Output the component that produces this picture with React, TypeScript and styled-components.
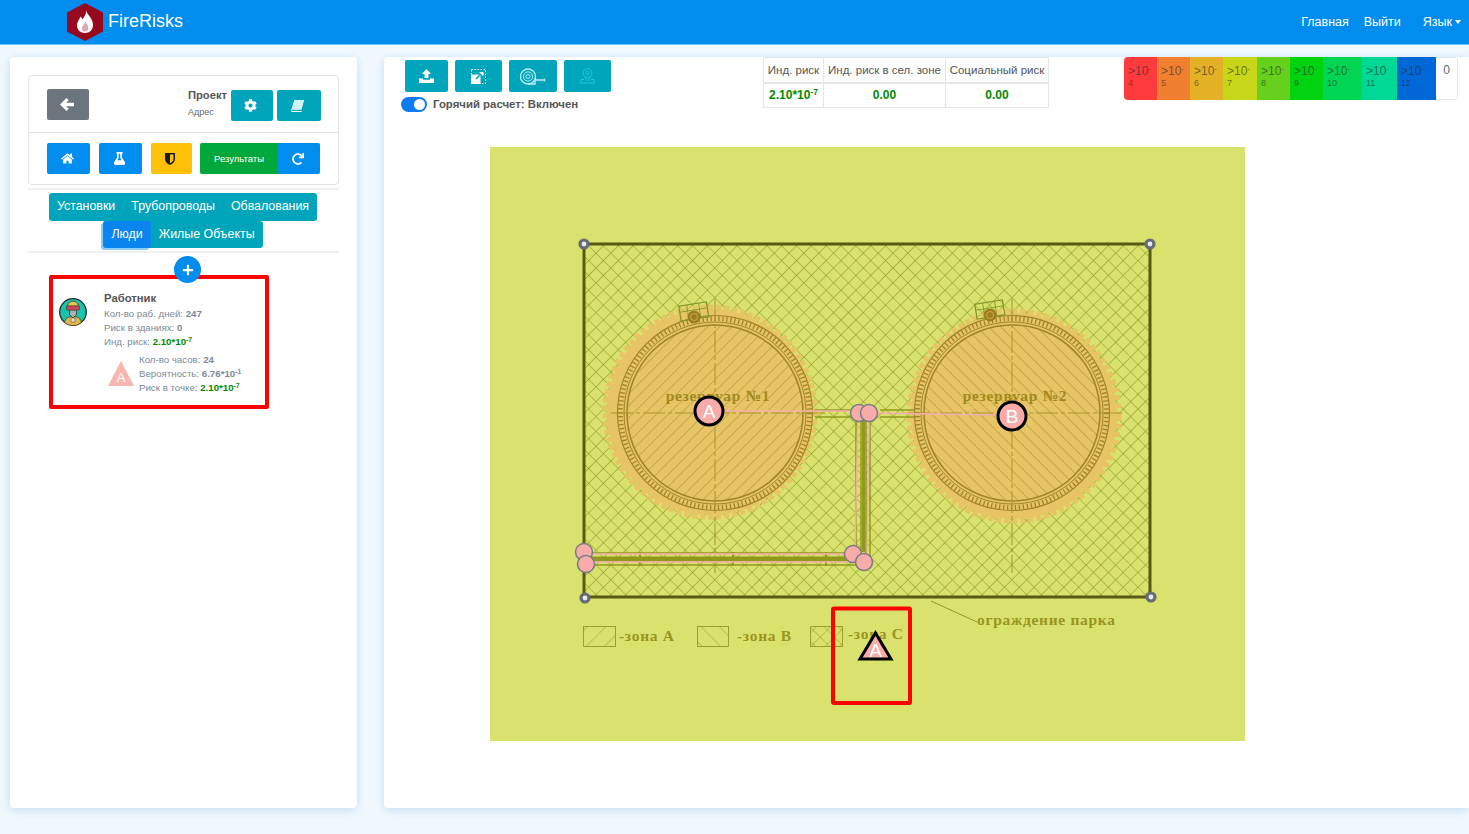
import { ReactNode } from "react";
import { createGlobalStyle, styled } from "styled-components";
import { FaCog, FaFlask, FaHome, FaPlus, FaRedo } from "react-icons/fa";

const GlobalStyle = createGlobalStyle`
  html, body {
    margin: 0;
    padding: 0;
    height: 834px;
    overflow: hidden;
    background: #f1f8fd;
    font-family: "Liberation Sans", Arial, sans-serif;
  }
`;

const TEAL = "#00a5bb";
const BLUE = "#008ded";

const riskCells = [
  { power: "4", color: "#ff3b3d", width: 33 },
  { power: "5", color: "#f0802f", width: 33 },
  { power: "6", color: "#e3b026", width: 33 },
  { power: "7", color: "#c8d619", width: 34 },
  { power: "8", color: "#66d11c", width: 33 },
  { power: "9", color: "#00d30f", width: 33 },
  { power: "10", color: "#00d653", width: 39 },
  { power: "11", color: "#00d896", width: 35 },
  { power: "12", color: "#0068d6", width: 39 },
];

function Power({ value }: { value: string }) {
  return (
    <>
      2.10*10<Sup>{value}</Sup>
    </>
  );
}

function UploadIcon() {
  return (
    <svg width="15" height="14" viewBox="0 0 15 14" fill="#fff">
      <path d="M7.5 0 12 5H9.4v4H5.6V5H3zM0 9.5h4v1.3h7V9.5h4V14H0z" />
    </svg>
  );
}

function ResizeIcon() {
  return (
    <svg width="15" height="15" viewBox="0 0 15 15" fill="none">
      <path d="M.5.5h14v14H.5z" stroke="#fff" strokeDasharray="1.500 1.500" />
      <path d="M0 5.500h9.500V15H0z" fill="#fff" />
      <path d="M5 10 11 4" stroke={TEAL} strokeWidth="1.600" />
      <path d="M8 3h4.500v4.500z" fill="#fff" />
    </svg>
  );
}

function TapeIcon() {
  return (
    <svg width="26" height="17" viewBox="0 0 26 17" fill="none" stroke="#bdeef4">
      <circle cx="8" cy="8.500" r="7.500" strokeWidth="1.300" />
      <circle cx="8" cy="8.500" r="4.600" />
      <circle cx="8" cy="8.500" r="2" />
      <path d="M8 16H15V10M15 12H25M24.500 10.500v3" strokeWidth="1.300" />
    </svg>
  );
}

function PinIcon() {
  return (
    <svg width="15" height="16" viewBox="0 0 15 16" fill="none" stroke="#25c3d6">
      <circle cx="7.5" cy="5" r="4.4" />
      <circle cx="7.5" cy="5" r="1.6" />
      <path d="M4.5 9 7.5 13l3-4M4 11.5H1L.5 15h14l-.5-3.500h-3" />
    </svg>
  );
}

function BookIcon() {
  return (
    <svg width="13" height="12" viewBox="0 0 13 12">
      <path d="M3.500 0H13l-2.600 9.500H1L.6 10.300c0 .5.3.7.9.7h9.300l-.3 1H1.200C.3 12-.2 11.300.1 10.300z" fill="#fff" />
      <path d="M3.500 0H13l-2.600 9.500H1z" fill="#d4f3f7" />
    </svg>
  );
}

function ArrowIcon() {
  return (
    <svg width="14" height="13" viewBox="0 0 14 13" fill="#fff">
      <path d="M0 6.500 6.500 0 8.800 2.300 6 4.800h8v3.400H6l2.800 2.500L6.500 13z" />
    </svg>
  );
}

function ShieldIcon() {
  return (
    <svg width="10" height="12" viewBox="0 0 10 12">
      <path d="M0 0h10v6c0 3-2.500 5-5 6C2.500 11 0 9 0 6z" fill="#1a1a10" />
      <path d="M5 1.500h3.500V6C8.500 8 6.800 9.500 5 10.300z" fill="#ffc107" />
    </svg>
  );
}

function WorkerAvatar() {
  return (
    <svg width="28" height="28" viewBox="0 0 28 28">
      <circle cx="14" cy="14" r="13.300" fill="#17c4ad" stroke="#1c2a2c" strokeWidth="1.300" />
      <path d="M5.500 24.500c1-4.500 4-6 8.500-6s7.500 1.500 8.500 6a13 13 0 0 1-17 0z" fill="#e3b54d" stroke="#3d3420" strokeWidth=".7" />
      <path d="M10.500 12h7v4.500L14 20l-3.500-3.500z" fill="#a9b0ae" stroke="#2b2b2b" strokeWidth=".7" />
      <path d="M8.500 8c.5-3 2.800-4.800 5.500-4.800S19 5 19.500 8z" fill="#e9c54a" stroke="#3d3420" strokeWidth=".7" />
      <path d="M7.500 8h13v4h-13z" fill="#c9485a" stroke="#3d3420" strokeWidth=".5" />
      <path d="M12 20h4v4h-4z" fill="#e7e3d5" stroke="#3d3420" strokeWidth=".5" />
    </svg>
  );
}

function SmallTriangle() {
  return (
    <svg width="26" height="26" viewBox="0 0 26 26">
      <path d="M13 0 26 25H0z" fill="#f8b6b0" />
      <text x="13" y="21" textAnchor="middle" fontSize="13" fill="#fff" fontFamily="Liberation Sans">
        A
      </text>
    </svg>
  );
}

function LogoMark() {
  return (
    <svg width="36" height="38" viewBox="0 0 36 38">
      <path d="M18 0 36 9.500v19L18 38 0 28.500v-19z" fill="#96091f" />
      <path
        d="M19 7c1 5 7 8 7 15 0 5-3.500 8-8 8s-8-3-8-7.500c0-4 2.500-5.500 3.500-9 1 .7 1.500 2 1.600 3C17.500 14 19.500 11 19 7z"
        fill="#fff"
      />
      <path d="M18.500 18c.5 3 3 4 3 7 0 2-1.500 3.500-3.500 3.500-1.800 0-3-1.200-3-3 0-3 3-4 3.500-7.500z" fill="#96091f" opacity=".35" />
    </svg>
  );
}

function Tank({
  cx,
  cy,
  zoneX,
  zoneY,
  hatch,
  label,
  valveX,
  valveY,
}: {
  cx: number;
  cy: number;
  zoneX: number;
  zoneY: number;
  hatch: string;
  label: string;
  valveX: number;
  valveY: number;
}) {
  return (
    <g>
      <circle cx={zoneX} cy={zoneY} r={103} fill="#e7c465" />
      <circle cx={zoneX} cy={zoneY} r={104} fill="none" stroke="#e7c465" strokeWidth="7" strokeDasharray="5 3" />
      <circle cx={cx} cy={cy} r={88} fill={`url(#${hatch})`} />
      <circle cx={cx} cy={cy} r={88} fill="none" stroke="#a0842a" strokeWidth="1.500" />
      <circle cx={cx} cy={cy} r={91} fill="none" stroke="#a0842a" strokeWidth="1" />
      <circle cx={cx} cy={cy} r={94.500} fill="none" stroke="#a0842a" strokeWidth="5" strokeDasharray="1.300 2.700" />
      <circle cx={cx} cy={cy} r={97.500} fill="none" stroke="#a0842a" strokeWidth="1.200" />
      <g transform={`rotate(-9 ${valveX} ${valveY})`}>
        <rect x={valveX - 14} y={valveY - 9} width="28" height="15" fill="none" stroke="#7f9428" strokeWidth="1.200" />
        <path d={`M${valveX - 14} ${valveY - 3}h28M${valveX - 6} ${valveY - 9}v15M${valveX + 6} ${valveY - 9}v15`} stroke="#7f9428" strokeWidth=".8" />
      </g>
      <circle cx={valveX} cy={valveY + 4} r="6.500" fill="#9c7e20" />
      <circle cx={valveX} cy={valveY + 4} r="3.500" fill="none" stroke="#e7c465" strokeWidth=".6" />
      <path
        d={`M${cx} ${cy - 114}V${cy + 160}M${cx - 104} ${cy}H${cx + 113}`}
        stroke="#a8952c"
        strokeWidth="1"
        strokeDasharray="22 3 4 3"
      />
      <TankLabel x={cx + 3} y={cy - 12} textAnchor="middle">
        {label}
      </TankLabel>
    </g>
  );
}

function Handle({ x, y }: { x: number; y: number }) {
  return <circle cx={x} cy={y} r="4" fill="#e8eaf0" stroke="#666b74" strokeWidth="3.200" />;
}

function PinkNode({ x, y }: { x: number; y: number }) {
  return <circle cx={x} cy={y} r="8.500" fill="#f8acaa" stroke="#777c80" strokeWidth="1.500" />;
}

function Point({ x, y, name }: { x: number; y: number; name: string }) {
  return (
    <g>
      <circle cx={x} cy={y} r="14" fill="#f8acaa" stroke="#000" strokeWidth="3" />
      <PointLetter x={x} y={y + 7} textAnchor="middle">
        {name}
      </PointLetter>
    </g>
  );
}

function ParkMap() {
  return (
    <MapCanvas width="755" height="594" viewBox="490 147 755 594">
      <defs>
        <pattern id="cross" width="10.500" height="10.500" patternUnits="userSpaceOnUse" patternTransform="rotate(45 584 244)">
          <path d="M0 0H10.500M0 0V10.500" stroke="#86911f" strokeWidth="1.100" fill="none" />
        </pattern>
        <pattern id="hatchA" width="8.500" height="8.500" patternUnits="userSpaceOnUse" patternTransform="rotate(45)">
          <path d="M0 0V8.500" stroke="#a08a2c" strokeWidth="1" />
        </pattern>
        <pattern id="hatchB" width="8.500" height="8.500" patternUnits="userSpaceOnUse" patternTransform="rotate(-45)">
          <path d="M0 0V8.500" stroke="#a08a2c" strokeWidth="1" />
        </pattern>
        <pattern id="legendA" width="13" height="13" patternUnits="userSpaceOnUse" patternTransform="rotate(45)">
          <path d="M0 0V13" stroke="#9aa030" strokeWidth="1" />
        </pattern>
        <pattern id="legendB" width="13" height="13" patternUnits="userSpaceOnUse" patternTransform="rotate(-45)">
          <path d="M0 0V13" stroke="#9aa030" strokeWidth="1" />
        </pattern>
        <pattern id="legendC" width="10" height="10" patternUnits="userSpaceOnUse" patternTransform="rotate(45)">
          <path d="M0 0H10M0 0V10" stroke="#9aa030" strokeWidth="1" fill="none" />
        </pattern>
      </defs>

      <rect x="490" y="147" width="755" height="594" fill="#d9e26d" />
      <rect x="584" y="244" width="566" height="353" fill="url(#cross)" />

      <Tank cx={715} cy={413} zoneX={710} zoneY={412} hatch="hatchA" label="резервуар №1" valveX={694} valveY={313} />
      <Tank cx={1012} cy={413} zoneX={1014} zoneY={416} hatch="hatchB" label="резервуар №2" valveX={990} valveY={311} />

      {/* трубы */}
      <g fill="none" stroke="#8f9a1c">
        <path d="M815 410H858M815 417H856M880 410H914M880 417H914" strokeWidth="1.500" />
        <path d="M856 417V553M870 415V565M861 417V556M866 417V560" strokeWidth="1.500" />
        <path d="M588 553H856M588 565H870" strokeWidth="1.500" />
        <path d="M590 559H852" strokeWidth="5" />
        <path d="M863.500 420V552" strokeWidth="3" />
        <path d="M640 552v14M733 552v14M826 552v14" strokeWidth="2" />
      </g>
      <g fill="none" stroke="#f3aeb0" strokeWidth="1.500">
        <path d="M723 411H858L855 554H584" />
        <path d="M998 415 869 413 867 562H586" />
      </g>

      <rect x="584" y="244" width="566" height="353" fill="none" stroke="#565a12" strokeWidth="3" />
      <Handle x={584} y={244} />
      <Handle x={1150} y={244} />
      <Handle x={585} y={598} />
      <Handle x={1151} y={597} />

      <PinkNode x={584} y={552} />
      <PinkNode x={586} y={564} />
      <PinkNode x={853} y={554} />
      <PinkNode x={864} y={562} />
      <PinkNode x={859} y={413} />
      <PinkNode x={869} y={413} />
      <Point x={709} y={411} name="A" />
      <Point x={1012} y={416} name="B" />

      <path d="M931 601 977 622" stroke="#8f9a26" strokeWidth="1" />
      <MapLabel x="977" y="625">
        ограждение парка
      </MapLabel>

      <rect x="583.500" y="626.500" width="32" height="20" fill="url(#legendA)" stroke="#9aa030" />
      <MapLabel x="619" y="641">
        -зона А
      </MapLabel>
      <rect x="697.500" y="626.500" width="31" height="20" fill="url(#legendB)" stroke="#9aa030" />
      <MapLabel x="737" y="641">
        -зона В
      </MapLabel>
      <rect x="810.500" y="626.500" width="32" height="20" fill="url(#legendC)" stroke="#9aa030" />
      <MapLabel x="848" y="639">
        -зона С
      </MapLabel>

      <path d="M875.500 633 891 659H860z" fill="#f8acaa" stroke="#000" strokeWidth="3" />
      <PointLetter x={875.500} y={657} textAnchor="middle">
        A
      </PointLetter>
      <rect x="833" y="608.500" width="77" height="94.500" fill="none" stroke="#ff0000" strokeWidth="4" rx="1" />
    </MapCanvas>
  );
}

function ToolButton({ children, $width }: { children: ReactNode; $width: number }) {
  return <SquareButton $width={$width}>{children}</SquareButton>;
}

export default function App() {
  return (
    <>
      <GlobalStyle />
      <Navbar>
        <Brand>
          <LogoMark />
          <BrandName>FireRisks</BrandName>
        </Brand>
        <NavLinks>
          <NavLink>Главная</NavLink>
          <NavLink>Выйти</NavLink>
          <NavLink $caret>Язык</NavLink>
        </NavLinks>
      </Navbar>

      <Main>
        <SidePanel>
          <ProjectBox>
            <ProjectRow>
              <BackButton>
                <ArrowIcon />
              </BackButton>
              <ProjectActions>
                <ProjectInfo>
                  <ProjectName>Проект</ProjectName>
                  <ProjectAddress>Адрес</ProjectAddress>
                </ProjectInfo>
                <IconButton $color={TEAL} $width={42}>
                  <FaCog />
                </IconButton>
                <IconButton $color={TEAL} $width={44}>
                  <BookIcon />
                </IconButton>
              </ProjectActions>
            </ProjectRow>
            <ModeRow>
              <IconButton $color={BLUE} $width={43}>
                <FaHome />
              </IconButton>
              <IconButton $color={BLUE} $width={43}>
                <FaFlask />
              </IconButton>
              <IconButton $color="#ffc107" $width={41}>
                <ShieldIcon />
              </IconButton>
              <ResultGroup>
                <ResultButton>Результаты</ResultButton>
                <RefreshButton>
                  <FaRedo />
                </RefreshButton>
              </ResultGroup>
            </ModeRow>
          </ProjectBox>

          <Separator />
          <Tabs>
            <TabRow>
              <Tab>Установки</Tab>
              <Tab>Трубопроводы</Tab>
              <Tab>Обвалования</Tab>
            </TabRow>
            <TabRow>
              <Tab $active>Люди</Tab>
              <Tab>Жилые Объекты</Tab>
            </TabRow>
          </Tabs>
          <Separator $gap={3} />

          <AddButton>
            <FaPlus />
          </AddButton>

          <WorkerCard>
            <AvatarSlot>
              <WorkerAvatar />
            </AvatarSlot>
            <WorkerInfo>
              <WorkerName>Работник</WorkerName>
              <InfoLine>
                Кол-во раб. дней: <b>247</b>
              </InfoLine>
              <InfoLine>
                Риск в зданиях: <b>0</b>
              </InfoLine>
              <InfoLine>
                Инд. риск:{" "}
                <RiskValue>
                  <Power value="-7" />
                </RiskValue>
              </InfoLine>
              <PointBlock>
                <SmallTriangle />
                <div>
                  <InfoLine>
                    Кол-во часов: <b>24</b>
                  </InfoLine>
                  <InfoLine>
                    Вероятность:{" "}
                    <b>
                      6.76*10<Sup>-1</Sup>
                    </b>
                  </InfoLine>
                  <InfoLine>
                    Риск в точке:{" "}
                    <RiskValue>
                      <Power value="-7" />
                    </RiskValue>
                  </InfoLine>
                </div>
              </PointBlock>
            </WorkerInfo>
          </WorkerCard>
        </SidePanel>

        <Workspace>
          <TopRow>
            <ToolColumn>
              <ToolBar>
                <ToolButton $width={43}>
                  <UploadIcon />
                </ToolButton>
                <ToolButton $width={47}>
                  <ResizeIcon />
                </ToolButton>
                <ToolButton $width={48}>
                  <TapeIcon />
                </ToolButton>
                <ToolButton $width={47}>
                  <PinIcon />
                </ToolButton>
              </ToolBar>
              <HotCalc>
                <Toggle />
                Горячий расчет: Включен
              </HotCalc>
            </ToolColumn>

            <ResultTable>
              <thead>
                <tr>
                  <HeadCell $width={60}>Инд. риск</HeadCell>
                  <HeadCell $width={122}>Инд. риск в сел. зоне</HeadCell>
                  <HeadCell $width={103}>Социальный риск</HeadCell>
                </tr>
              </thead>
              <tbody>
                <tr>
                  <ValueCell>
                    <Power value="-7" />
                  </ValueCell>
                  <ValueCell>0.00</ValueCell>
                  <ValueCell>0.00</ValueCell>
                </tr>
              </tbody>
            </ResultTable>

            <RiskScale>
              {riskCells.map((c) => (
                <RiskCell key={c.power} $color={c.color} $width={c.width}>
                  <RiskTop>
                    &gt;10<RiskDash>-</RiskDash>
                  </RiskTop>
                  <RiskPower>{c.power}</RiskPower>
                </RiskCell>
              ))}
              <ZeroCell>0</ZeroCell>
            </RiskScale>
          </TopRow>
          <ParkMap />
        </Workspace>
      </Main>
    </>
  );
}

const Navbar = styled.nav`
  height: 45px;
  background: ${BLUE};
  display: flex;
  align-items: center;
  justify-content: space-between;
  padding: 0 8px 1px 67px;
  border-bottom: 1px solid #6cc0f5;
  box-sizing: border-box;
`;

const Brand = styled.div`
  display: flex;
  align-items: center;
  gap: 5px;
`;

const BrandName = styled.span`
  color: #fff;
  font-size: 18px;
`;

const NavLinks = styled.div`
  display: flex;
  align-items: center;
  gap: 15px;
`;

const NavLink = styled.a<{ $caret?: boolean }>`
  color: #fff;
  font-size: 12.500px;
  margin-left: ${(p) => (p.$caret ? "7px" : "0")};

  &::after {
    content: "";
    display: ${(p) => (p.$caret ? "inline-block" : "none")};
    margin-left: 3px;
    vertical-align: 2px;
    border-top: 4px solid #fff;
    border-left: 3px solid transparent;
    border-right: 3px solid transparent;
  }
`;

const Main = styled.main`
  display: flex;
  gap: 27px;
  padding: 12px 0 0 10px;
  height: 751px;
`;

const SidePanel = styled.aside`
  width: 347px;
  height: 751px;
  flex: none;
  box-sizing: border-box;
  padding: 18px 18px 0;
  background: #fff;
  border-radius: 4px;
  box-shadow: 0 2px 10px rgba(0, 110, 200, 0.2);
`;

const ProjectBox = styled.div`
  width: 311px;
  height: 110px;
  box-sizing: border-box;
  border: 1px solid #dfe3e6;
  border-radius: 4px;
`;

const ProjectRow = styled.div`
  height: 57px;
  box-sizing: border-box;
  padding: 0 17px 0 18px;
  display: flex;
  align-items: center;
  justify-content: space-between;
  border-bottom: 1px solid #dfe3e6;
`;

const ProjectActions = styled.div`
  display: flex;
  align-items: center;
  gap: 4px;
  margin-top: 3px;
`;

const ProjectInfo = styled.div`
  margin-top: -6px;
`;

const ProjectName = styled.div`
  font-size: 11.200px;
  font-weight: bold;
  color: #555;
  line-height: 15px;
`;

const ProjectAddress = styled.div`
  font-size: 9px;
  color: #666;
  line-height: 11px;
  margin-top: 4px;
`;

const ButtonBase = styled.button`
  height: 31px;
  border: none;
  border-radius: 2px;
  padding: 0 3px 0 0;
  display: flex;
  align-items: center;
  justify-content: center;
  color: #fff;
  font-family: inherit;
  font-size: 13px;
`;

const BackButton = styled(ButtonBase)`
  width: 42px;
  background: #6c757d;
`;

const IconButton = styled(ButtonBase)<{ $color: string; $width: number }>`
  width: ${(p) => p.$width}px;
  background: ${(p) => p.$color};
`;

const ModeRow = styled.div`
  display: flex;
  gap: 9px;
  padding: 10px 0 0 18px;
`;

const ResultGroup = styled.div`
  display: flex;
  margin-left: -1px;
`;

const ResultButton = styled(ButtonBase)`
  width: 78px;
  padding: 0;
  background: #00a83c;
  font-size: 9.500px;
  border-radius: 2px 0 0 2px;
`;

const RefreshButton = styled(ButtonBase)`
  width: 42px;
  background: ${BLUE};
  font-size: 12px;
  border-radius: 0 2px 2px 0;
`;

const Separator = styled.hr<{ $gap?: number }>`
  border: none;
  border-top: 2px solid #eef0f2;
  margin: ${(p) => p.$gap ?? 3}px 0 2px;
`;

const Tabs = styled.div`
  display: flex;
  flex-direction: column;
  align-items: center;
  margin: 3px 0 0 -1px;
`;

const TabRow = styled.div`
  display: flex;
  background: ${TEAL};
  border-radius: 3px;
`;

const Tab = styled.div<{ $active?: boolean }>`
  height: 27.500px;
  line-height: 27.500px;
  padding: 0 8px;
  font-size: 12.400px;
  color: #fff;
  background: ${(p) => (p.$active ? "#0a84ee" : "transparent")};
  border-radius: 3px;
  box-shadow: ${(p) => (p.$active ? "-2px 2px 0 0 #8ccdf8" : "none")};
`;

const AddButton = styled.div`
  width: 27px;
  height: 27px;
  margin: 3px auto -8px;
  transform: translateX(4px);
  border-radius: 50%;
  background: ${BLUE};
  color: #fff;
  font-size: 12px;
  display: flex;
  align-items: center;
  justify-content: center;
  position: relative;
  z-index: 1;
`;

const WorkerCard = styled.div`
  margin-left: 21px;
  width: 220px;
  height: 134px;
  box-sizing: border-box;
  border: 4px solid #ff0000;
  border-radius: 2px;
  padding: 12px 0 0 6px;
  display: flex;
`;

const AvatarSlot = styled.div`
  width: 45px;
  flex: none;
  padding-top: 7px;
`;

const WorkerInfo = styled.div`
  color: #7c8a96;
  min-width: 0;
`;

const WorkerName = styled.div`
  font-size: 11.300px;
  font-weight: bold;
  color: #555;
  line-height: 14px;
  margin-bottom: 2px;
`;

const InfoLine = styled.div`
  font-size: 9.700px;
  line-height: 14px;
  white-space: nowrap;
`;

const Sup = styled.sup`
  font-size: 0.7em;
  line-height: 0;
  vertical-align: 0.5em;
`;

const RiskValue = styled.b`
  color: #008a00;
`;

const PointBlock = styled.div`
  display: flex;
  gap: 5px;
  align-items: center;
  margin: 4px 0 0 4px;
`;

const Workspace = styled.section`
  flex: 1;
  height: 751px;
  background: #fff;
  border-radius: 4px 0 0 4px;
  box-shadow: 0 2px 10px rgba(0, 110, 200, 0.2);
`;

const TopRow = styled.div`
  height: 90px;
  display: flex;
  align-items: flex-start;
  padding-left: 21px;
`;

const ToolColumn = styled.div`
  width: 358px;
  flex: none;
  padding-top: 3px;
`;

const ToolBar = styled.div`
  display: flex;
  gap: 7px;
`;

const SquareButton = styled(ButtonBase)<{ $width: number }>`
  width: ${(p) => p.$width}px;
  height: 32px;
  padding: 0;
  background: ${TEAL};
`;

const HotCalc = styled.div`
  margin: 5px 0 0 -4px;
  display: flex;
  align-items: center;
  gap: 6px;
  font-size: 11.400px;
  font-weight: bold;
  color: #555;
  line-height: 15px;
`;

const Toggle = styled.span`
  width: 26px;
  height: 15px;
  border-radius: 8px;
  background: #0d7cf2;
  position: relative;

  &::after {
    content: "";
    position: absolute;
    top: 2px;
    right: 2px;
    width: 11px;
    height: 11px;
    border-radius: 50%;
    background: #fff;
  }
`;

const ResultTable = styled.table`
  width: 285px;
  flex: none;
  height: 51px;
  border-collapse: collapse;
  table-layout: fixed;
`;

const HeadCell = styled.th<{ $width: number }>`
  width: ${(p) => p.$width}px;
  box-sizing: border-box;
  padding: 0;
  height: 25px;
  border: 1px solid #e3e6e9;
  border-bottom-width: 2px;
  font-size: 11.500px;
  font-weight: normal;
  color: #555;
  white-space: nowrap;
`;

const ValueCell = styled.td`
  padding: 0;
  border: 1px solid #e3e6e9;
  text-align: center;
  font-size: 12px;
  font-weight: bold;
  color: #008a00;
`;

const RiskScale = styled.div`
  margin-left: 75px;
  display: flex;
  height: 43px;
  flex: none;
  border-radius: 4px;
  overflow: hidden;
`;

const RiskCell = styled.div<{ $color: string; $width: number }>`
  width: ${(p) => p.$width}px;
  background: ${(p) => p.$color};
  box-sizing: border-box;
  padding: 5px 0 0 4px;
  color: rgba(40, 40, 40, 0.6);
`;

const RiskTop = styled.div`
  font-size: 12px;
  line-height: 13px;
  white-space: nowrap;
`;

const RiskDash = styled.span`
  font-size: 8px;
  vertical-align: 4px;
`;

const RiskPower = styled.div`
  font-size: 9px;
  line-height: 11px;
`;

const ZeroCell = styled.div`
  width: 22px;
  box-sizing: border-box;
  border: 1px solid #e3e6e9;
  border-left: none;
  border-radius: 0 4px 4px 0;
  padding-top: 5px;
  text-align: center;
  font-size: 12px;
  color: #5a6a76;
`;

const MapCanvas = styled.svg`
  display: block;
  margin-left: 106px;
`;

const MapLabel = styled.text`
  font-family: "Liberation Serif", "Times New Roman", serif;
  font-size: 15.500px;
  font-weight: bold;
  letter-spacing: 0.7px;
  fill: #9a9420;
`;

const TankLabel = styled(MapLabel)`
  fill: #a08a20;
`;

const PointLetter = styled.text`
  font-family: "Liberation Sans", Arial, sans-serif;
  font-size: 19px;
  fill: #fff;
`;
